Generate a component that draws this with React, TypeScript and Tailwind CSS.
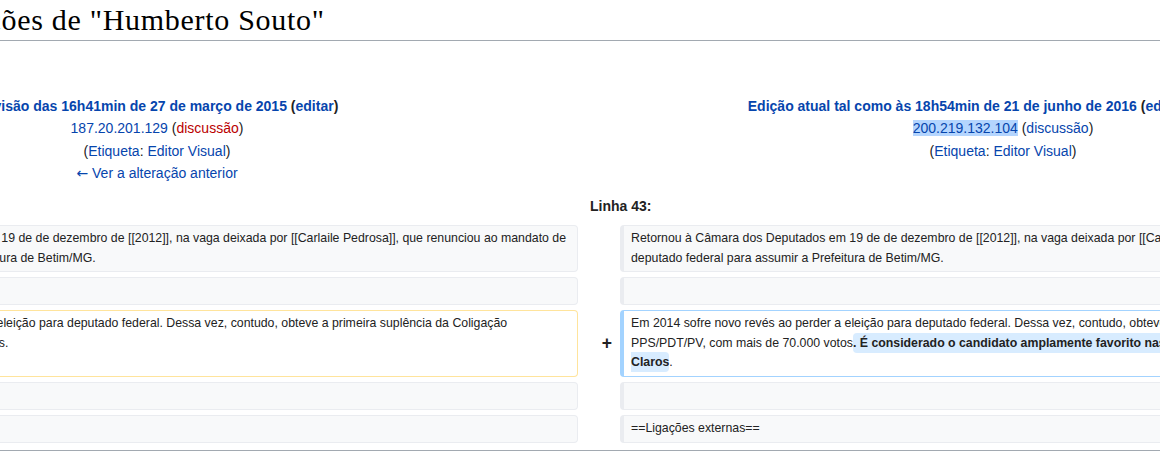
import React from "react";

const LINK = "text-[#0645ad]";

function Box({
  kind,
  children,
}: {
  kind: "context" | "deleted" | "added";
  children?: React.ReactNode;
}) {
  const base =
    "rounded-[4px] border border-l-4 pl-[7px] pr-[6px] py-[3px] text-[12.32px] leading-[1.6] text-[#222]";
  const cls =
    kind === "context"
      ? "border-[#eaecf0] bg-[#f8f9fa]"
      : kind === "deleted"
      ? "border-[#ffe49c] bg-white"
      : "border-[#a3d3ff] bg-white";
  return <div className={`${base} ${cls}`}>{children ?? "\u00a0"}</div>;
}

function Marker({ sign }: { sign?: string }) {
  return (
    <div className="flex items-center justify-end pr-[8px] text-[17.5px] font-bold leading-[1.2] text-[#222]">
      {sign}
    </div>
  );
}

function Row({
  left,
  right,
  lm,
  rm,
}: {
  left: React.ReactNode;
  right: React.ReactNode;
  lm?: string;
  rm?: string;
}) {
  return (
    <div className="grid grid-cols-[38px_806px_42px_806px]">
      <Marker sign={lm} />
      {left}
      <Marker sign={rm} />
      {right}
    </div>
  );
}

export default function App() {
  const line1 =
    "Retornou à Câmara dos Deputados em 19 de de dezembro de [[2012]], na vaga deixada por [[Carlaile Pedrosa]], que renunciou ao mandato de deputado federal para assumir a Prefeitura de Betim/MG.";
  return (
    <div className="h-[461px] w-[1160px] overflow-hidden bg-white font-['Liberation_Sans',Arial,sans-serif] text-[#222]">
      <div className="ml-[-266px] w-[1692px]">
        <h1 className="ml-[-2px] whitespace-nowrap border-b border-[#a2a9b1] font-['Liberation_Serif','Times_New_Roman',serif] text-[30px] font-normal leading-[40px] tracking-[0.7px] text-black">
          Diferenças entre edições de "Humberto Souto"
        </h1>

        <div className="mt-[54px] grid grid-cols-2 text-center text-[14px] leading-[22.4px] whitespace-nowrap">
          <div>
            <div className="font-bold">
              <span className={LINK}>
                Revisão das 16h41min de 27 de março de 2015
              </span>{" "}
              <span>
                (<span className={LINK}>editar</span>)
              </span>
            </div>
            <div>
              <span className={LINK}>187.20.201.129</span> (
              <span className="text-[#ba0000]">discussão</span>)
            </div>
            <div>
              (<span className={LINK}>Etiqueta</span>:{" "}
              <span className={LINK}>Editor Visual</span>)
            </div>
            <div>
              <span className={LINK}>
                <span className="font-['DejaVu_Sans',sans-serif]">←</span> Ver a
                alteração anterior
              </span>
            </div>
          </div>
          <div>
            <div className="font-bold">
              <span className={LINK}>
                Edição atual tal como às 18h54min de 21 de junho de 2016
              </span>{" "}
              <span>
                (<span className={LINK}>editar</span>)
              </span>{" "}
              <span>
                (<span className={LINK}>desfazer</span>)
              </span>
            </div>
            <div>
              <span className={`${LINK} bg-[#b4d5fe]`}>200.219.132.104</span>{" "}
              (<span className={LINK}>discussão</span>)
            </div>
            <div>
              (<span className={LINK}>Etiqueta</span>:{" "}
              <span className={LINK}>Editor Visual</span>)
            </div>
          </div>
        </div>

        <div className="mt-[10.4px] grid grid-cols-2 text-[14px] font-bold leading-[22.4px]">
          <div className="pl-[10px]">Linha 43:</div>
          <div className="pl-[10px]">Linha 43:</div>
        </div>

        <div className="mt-[7.6px] flex flex-col gap-[5px]">
          <Row
            left={<Box kind="context">{line1}</Box>}
            right={<Box kind="context">{line1}</Box>}
          />
          <Row left={<Box kind="context" />} right={<Box kind="context" />} />
          <Row
            lm="−"
            rm="+"
            left={
              <Box kind="deleted">
                Em 2014 sofre novo revés ao perder a eleição para deputado
                federal. Dessa vez, contudo, obteve a primeira suplência da
                Coligação PPS/PDT/PV, com mais de 70.000 votos.
              </Box>
            }
            right={
              <Box kind="added">
                Em 2014 sofre novo revés ao perder a eleição para deputado
                federal. Dessa vez, contudo, obteve a primeira suplência da
                Coligação PPS/PDT/PV, com mais de 70.000 votos
                <span className="rounded-[4px] bg-[#d8ecff] py-[3px] font-bold">
                  . É considerado o candidato amplamente favorito nas eleições
                  de 2016 à prefeitura de Montes Claros
                </span>
                .
              </Box>
            }
          />
          <Row left={<Box kind="context" />} right={<Box kind="context" />} />
          <Row
            left={<Box kind="context">==Ligações externas==</Box>}
            right={<Box kind="context">==Ligações externas==</Box>}
          />
        </div>

        <div className="mt-[7.4px] h-px bg-[#a2a9b1]" />
      </div>
    </div>
  );
}
